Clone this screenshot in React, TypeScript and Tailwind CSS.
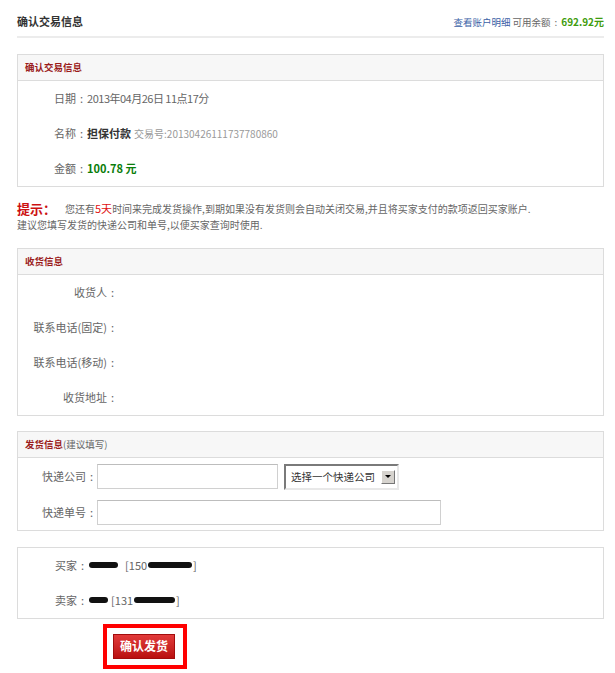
import type { ReactNode } from "react";

const font = { fontFamily: '"Noto Sans CJK SC", "Liberation Sans", sans-serif' };

function Panel({ title, children }: { title?: ReactNode; children: ReactNode }) {
  return (
    <div className="border border-[#dcdcdc] bg-white">
      {title && (
        <div className="flex h-[26px] items-center border-b border-[#dcdcdc] bg-[#f7f7f7] px-[7px] text-[9.5px] font-bold text-[#9b1c1c]">
          {title}
        </div>
      )}
      {children}
    </div>
  );
}

// centred colon, like the full-width one in the original font
function Colon() {
  return <span className="px-[4px]">:</span>;
}

function Blot({ w }: { w: number }) {
  return (
    <span
      className="mx-[1px] inline-block h-[6px] rounded-full bg-[#111] align-middle"
      style={{ width: w }}
    />
  );
}

export default function App() {
  return (
    <div className="min-h-screen bg-white pl-[17px] pr-[11px] text-[#666]" style={font}>
      {/* page title */}
      <div className="flex items-center justify-between border-b-2 border-[#ececec] pb-[6px] pt-[13px]">
        <span className="text-[11px] font-bold text-[#333]">确认交易信息</span>
        <span className="text-[9.5px]">
          <a className="text-[#3b5fa6]">查看账户明细</a> 可用余额<Colon />
          <b className="text-[10px] text-[#3f9c0e]">692.92元</b>
        </span>
      </div>

      <div className="mt-[16px]">
        <Panel title="确认交易信息">
          <div className="pl-[36px] text-[11px]">
            <div className="flex h-[35px] items-center">
              日期<Colon />
              <span className="tracking-[-0.5px]">2013年04月26日 11点17分</span>
            </div>
            <div className="flex h-[35px] items-center">
              名称<Colon />
              <b className="text-[#333]">担保付款</b>
              <span className="ml-[3px] text-[10px] text-[#999]">交易号:20130426111737780860</span>
            </div>
            <div className="flex h-[35px] items-center">
              金额<Colon />
              <b className="text-[#0a7d0a]">100.78 元</b>
            </div>
          </div>
        </Panel>
      </div>

      {/* tip */}
      <div className="mt-[14px] flex flex-col gap-[1px] text-[10px] leading-[13px]">
        <div className="flex h-[16px] items-center">
          <b className="mr-[9px] text-[13px] leading-[15px] text-[#cc1111]">提示：</b>
          您还有<span className="text-[11px] text-[#e01010]">5天</span>
          时间来完成发货操作,到期如果没有发货则会自动关闭交易,并且将买家支付的款项返回买家账户.
        </div>
        <div>建议您填写发货的快递公司和单号,以便买家查询时使用.</div>
      </div>

      <div className="mt-[17px]">
        <Panel title="收货信息">
          <div className="text-[11px]">
            {["收货人", "联系电话(固定)", "联系电话(移动)", "收货地址"].map((l) => (
              <div key={l} className="flex h-[35px] items-center">
                <span className="w-[100px] text-right">
                  {l}
                  <Colon />
                </span>
              </div>
            ))}
          </div>
        </Panel>
      </div>

      <div className="mt-[15px]">
        <Panel
          title={
            <>
              发货信息<span className="font-normal text-[#666]">(建议填写)</span>
            </>
          }
        >
          <div className="flex flex-col gap-[10px] pb-[5px] pt-[6px] text-[11px]">
            <div className="flex items-center">
              <span className="w-[79px] text-right">
                快递公司<Colon />
              </span>
              <input className="h-[25px] w-[181px] border border-[#d0d0d0] border-t-[#bdbdbd] bg-white px-1 outline-none" />
              <div className="ml-[6px] flex h-[26px] w-[115px] items-center border-2 border-b-[#e8e8e8] border-l-[#7a7a7a] border-r-[#e8e8e8] border-t-[#7a7a7a] bg-white pl-[5px] pr-[2px] text-[10.5px] text-[#333]">
                <span className="flex-1 whitespace-nowrap">选择一个快递公司</span>
                <span className="flex h-[14px] w-[14px] shrink-0 items-center justify-center border border-b-[#777] border-l-white border-r-[#777] border-t-white bg-[#d6d3ce]">
                  <span className="h-0 w-0 border-x-[3px] border-t-[3px] border-x-transparent border-t-black" />
                </span>
              </div>
            </div>
            <div className="flex items-center">
              <span className="w-[79px] text-right">
                快递单号<Colon />
              </span>
              <input className="h-[25px] w-[344px] border border-[#d0d0d0] border-t-[#bdbdbd] bg-white px-1 outline-none" />
            </div>
          </div>
        </Panel>
      </div>

      <div className="mt-[16px]">
        <Panel>
          <div className="pl-[37px] text-[11px]">
            <div className="flex h-[35px] items-center">
              买家<Colon />
              <Blot w={29} />
              <span className="ml-[6px]">[150</span>
              <Blot w={44} />]
            </div>
            <div className="flex h-[35px] items-center">
              卖家<Colon />
              <Blot w={19} />
              <span className="ml-[2px]">[131</span>
              <Blot w={41} />]
            </div>
          </div>
        </Panel>
      </div>

      <div className="ml-[86px] mt-[5px] inline-block border-4 border-[#ff0000] p-[6px] pr-[8px]">
        <button className="flex h-[25px] w-[62px] items-center justify-center border border-[#a30d0d] bg-gradient-to-b from-[#e23a3a] to-[#b90f0f] text-[12px] font-bold text-white">
          确认发货
        </button>
      </div>
    </div>
  );
}
